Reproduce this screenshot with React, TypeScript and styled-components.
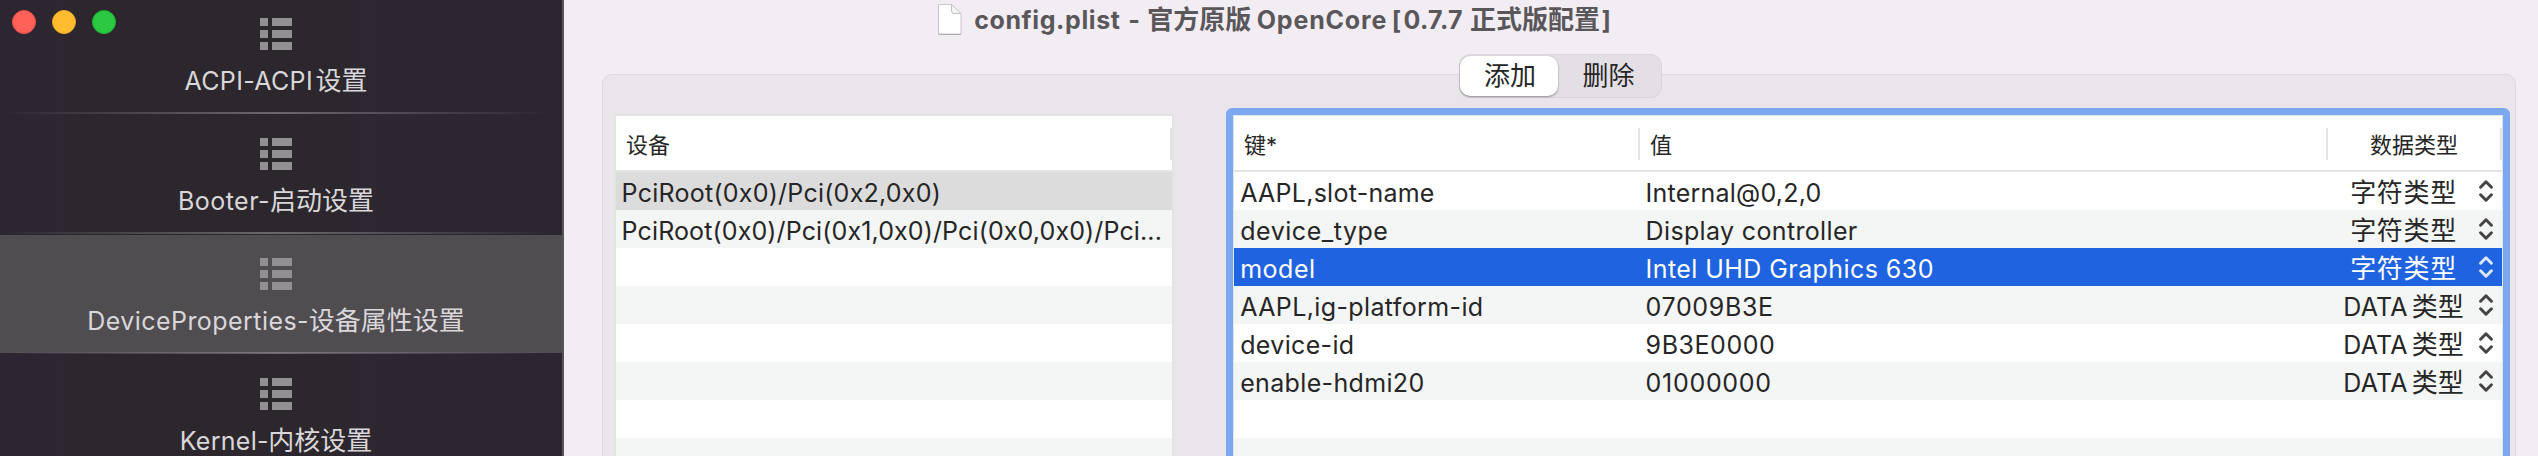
import React from 'react';
import styled, { createGlobalStyle } from 'styled-components';

const GlobalStyle = createGlobalStyle`
  html, body { margin: 0; padding: 0; overflow: hidden; background: #f2edf3; }
  *, *::before, *::after { box-sizing: border-box; }
`;

const Window = styled.div`
  position: relative;
  display: flex;
  width: 2538px;
  height: 456px;
  overflow: hidden;
  background: #f2edf3;
  color: #262626;
  font-family: Inter, "Noto Sans CJK SC", sans-serif;
  font-size: 25px;
  white-space: nowrap;
`;

const Sidebar = styled.aside`
  flex: none;
  width: 564px;
  height: 456px;
  overflow: hidden;
  border-right: 2px solid #585357;
  background: linear-gradient(90deg, #2c2632 0, #2c2731 60px, #2c272d 74px, #2c272d 345px, #2c2731 356px, #2c2631 100%);
`;

const TrafficLights = styled.div`
  position: absolute;
  top: 10px;
  left: 12px;
  display: flex;
  gap: 16px;
`;

const Light = styled.span<{ $fill: string; $edge: string }>`
  width: 24px;
  height: 24px;
  border-radius: 50%;
  background: ${p => p.$fill};
  border: 1px solid ${p => p.$edge};
`;

const NavItem = styled.div<{ $first?: boolean; $active?: boolean }>`
  display: flex;
  flex-direction: column;
  height: ${p => (p.$first ? 114 : 120)}px;
  padding-top: ${p => (p.$first ? 18 : 24)}px;
  background: ${p => (p.$active ? 'linear-gradient(#504d51, #504d51) 0 1px / 100% 118px no-repeat' : 'none')};

  & > svg { display: block; flex: none; margin-left: 260px; }
`;

const NavLabel = styled.div`
  width: 552px;
  height: 60px;
  margin-top: 2px;
  line-height: 58px;
  text-align: center;
  color: #d9d7d9;
`;

const NavRule = styled.div`
  flex: none;
  width: 552px;
  height: 2px;
  background: linear-gradient(90deg, rgba(160, 155, 162, 0), rgba(160, 155, 162, 0.55) 50%, rgba(160, 155, 162, 0));
`;

const Latin = styled.span<{ $track?: number; $gap?: number }>`
  letter-spacing: ${p => p.$track ?? 0}px;
  margin-left: ${p => p.$gap ?? 0}px;
`;

const Han = styled.span<{ $gap?: number; $track?: number }>`
  font-size: 26px;
  line-height: 0;
  letter-spacing: ${p => p.$track ?? 0}px;
  margin-left: ${p => p.$gap ?? 0}px;
`;

const Main = styled.main`
  position: relative;
  flex: 1;
  display: flex;
  flex-direction: column;
`;

const TitleBar = styled.header`
  display: flex;
  flex: none;
  align-items: flex-start;
  height: 74px;
  padding-left: 372px;
  font-weight: 700;
  color: #59575a;

  & > svg { display: block; flex: none; margin-top: 2px; }
`;

const Title = styled.div`
  margin-left: 12.2px;
  height: 40px;
  line-height: 41px;
`;

const Segmented = styled.div`
  position: absolute;
  top: 54px;
  left: 895px;
  display: flex;
  width: 203px;
  height: 44px;
  padding: 2px 3px 2px 1px;
  border-radius: 12px;
  background: #e4dfe5;
  box-shadow: inset 0 0 0 1px #dbd6dc;
  font-size: 26px;
`;

const Segment = styled.div<{ $on?: boolean }>`
  flex: ${p => (p.$on ? '0 0 98px' : '1')};
  height: 40px;
  line-height: 39px;
  padding-left: ${p => (p.$on ? 2 : 0)}px;
  text-align: center;
  border-radius: 10px;
  background: ${p => (p.$on ? '#fff' : 'none')};
  box-shadow: ${p => (p.$on ? '0 1px 2px rgba(0,0,0,.35), 0 0 1px rgba(0,0,0,.2)' : 'none')};
`;

const Panel = styled.section`
  display: flex;
  flex: none;
  align-items: flex-start;
  height: 400px;
  margin: 0 22px 0 38px;
  padding: 39px 5px 0 11px;
  border: 1px solid #dcd7dd;
  border-radius: 10px;
  background: #eae5ea;
`;

const DeviceTable = styled.div`
  width: 560px;
  height: 360px;
  border: 2px solid #e4e3e4;
  background: #fff;
`;

const FocusRing = styled.div`
  width: 1284px;
  height: 370px;
  margin: -6px 0 0 52px;
  border: 7px solid #7ba8ef;
  border-radius: 6px;
`;

const PropertyTable = styled.div`
  height: 356px;
  border: 1px solid #dfe4ea;
  background: #fff;
`;

const HeadRow = styled.div`
  display: flex;
  height: 56px;
  padding-top: 12px;
  border-bottom: 2px solid #e4e4e4;
  font-size: 22px;
`;

const HeadCell = styled.div<{ $w: number; $center?: boolean }>`
  width: ${p => p.$w}px;
  height: 32px;
  line-height: 34px;
  padding-left: ${p => (p.$center ? 0 : 10)}px;
  text-align: ${p => (p.$center ? 'center' : 'left')};
  border-right: 2px solid #e4e4e4;
`;

type Tone = 'even' | 'odd' | 'muted' | 'active';
const tones: Record<Tone, string> = { even: '#ffffff', odd: '#f4f5f5', muted: '#dcdcdc', active: '#1f63e0' };

const Row = styled.div<{ $tone: Tone }>`
  display: flex;
  height: 38px;
  line-height: 42px;
  background: ${p => tones[p.$tone]};
  color: ${p => (p.$tone === 'active' ? '#fff' : '#262626')};
`;

const Cell = styled.div<{ $w: number; $pad: number; $track: number }>`
  width: ${p => p.$w}px;
  padding-left: ${p => p.$pad}px;
  letter-spacing: ${p => p.$track}px;
`;

const TypeCell = styled.div`
  display: flex;
  width: 174px;

  & > svg { display: block; flex: none; margin-top: 8px; }
`;

const TypeLabel = styled.div`
  width: 151px;
  text-align: center;
`;

const ListIcon = () => (
  <svg width="32" height="32" viewBox="0 0 32 32" fill="#929092">
    {[0, 12, 24].map(y => (
      <React.Fragment key={y}>
        <rect x="0" y={y} width="8" height="8" />
        <rect x="12" y={y} width="20" height="8" />
      </React.Fragment>
    ))}
  </svg>
);

const FileIcon = () => (
  <svg width="26" height="34" viewBox="0 0 26 34">
    <path d="M2.5 2.5H15.5L25 12V32H2.5Z" fill="#fff" stroke="#c9c5ca" strokeWidth="1" strokeLinejoin="round" />
    <path d="M15.5 2.5V9Q15.5 11.5 18 11.5H25Z" fill="#f7f5f7" stroke="#c4c0c5" strokeWidth="1" strokeLinejoin="round" />
    <path d="M2.5 32.5H25" stroke="#b0acb1" strokeWidth="1" />
  </svg>
);

const Chevrons = ({ active }: { active: boolean }) => (
  <svg width="14" height="22" viewBox="0 0 14 22" fill="none" stroke={active ? '#dce8fb' : '#444444'}
    strokeWidth="3" strokeLinecap="round" strokeLinejoin="round">
    <path d="M1.6 7.2L7 1.8L12.4 7.2" />
    <path d="M1.6 14.8L7 20.2L12.4 14.8" />
  </svg>
);

const sections = [
  { latin: 'ACPI-ACPI', han: '设置', track: 0.36, gap: 2.5 },
  { latin: 'Booter-', han: '启动设置', track: 0.49, gap: 0 },
  { latin: 'DeviceProperties-', han: '设备属性设置', track: 0.45, gap: -0.3, active: true },
  { latin: 'Kernel-', han: '内核设置', track: 0.3, gap: -0.6 },
];

const devices: { path: string; track: number; tone: Tone }[] = [
  { path: 'PciRoot(0x0)/Pci(0x2,0x0)', track: 0.25, tone: 'muted' },
  { path: 'PciRoot(0x0)/Pci(0x1,0x0)/Pci(0x0,0x0)/Pci...', track: 0.126, tone: 'odd' },
  ...(['even', 'odd', 'even', 'odd', 'even', 'odd'] as Tone[]).map(tone => ({ path: '', track: 0, tone })),
];

const properties = [
  { key: 'AAPL,slot-name', kt: 0.26, value: 'Internal@0,2,0', vt: 0.23, data: false },
  { key: 'device_type', kt: 0.54, value: 'Display controller', vt: 0.35, data: false },
  { key: 'model', kt: 0.5, value: 'Intel UHD Graphics 630', vt: 0.43, data: false, active: true },
  { key: 'AAPL,ig-platform-id', kt: 0.38, value: '07009B3E', vt: 0.64, data: true },
  { key: 'device-id', kt: 0.34, value: '9B3E0000', vt: 0.54, data: true },
  { key: 'enable-hdmi20', kt: 0.34, value: '01000000', vt: 0.7, data: true },
];

export default function App() {
  return (
    <Window>
      <GlobalStyle />
      <Sidebar>
        {sections.map((s, i) => (
          <NavItem key={s.latin} $first={i === 0} $active={s.active}>
            <ListIcon />
            <NavLabel>
              <Latin $track={s.track}>{s.latin}</Latin>
              <Han $gap={s.gap}>{s.han}</Han>
            </NavLabel>
            <NavRule />
          </NavItem>
        ))}
      </Sidebar>
      <TrafficLights>
        <Light $fill="#ff6058" $edge="#ee4f49" />
        <Light $fill="#ffbd2e" $edge="#eda827" />
        <Light $fill="#2ac941" $edge="#1fb032" />
      </TrafficLights>
      <Main>
        <TitleBar>
          <FileIcon />
          <Title>
            <Latin $track={0.6}>config.plist</Latin>
            <Latin $gap={7.8}>-</Latin>
            <Han $gap={7.2}>官方原版</Han>
            <Latin $track={0.83} $gap={5.5}>OpenCore</Latin>
            <Latin $gap={4.5}>[</Latin>
            <Latin $track={0.41} $gap={2.3}>0.7.7</Latin>
            <Han $gap={7}>正式版配置</Han>
            <Latin $gap={1.5}>]</Latin>
          </Title>
        </TitleBar>
        <Panel>
          <DeviceTable>
            <HeadRow>
              <HeadCell $w={556}>设备</HeadCell>
            </HeadRow>
            {devices.map((d, i) => (
              <Row key={i} $tone={d.tone}>
                <Cell $w={556} $pad={5.6} $track={d.track}>{d.path}</Cell>
              </Row>
            ))}
          </DeviceTable>
          <FocusRing>
            <PropertyTable>
              <HeadRow>
                <HeadCell $w={406}>键*</HeadCell>
                <HeadCell $w={688}>值</HeadCell>
                <HeadCell $w={174} $center>数据类型</HeadCell>
              </HeadRow>
              {properties.map((p, i) => (
                <Row key={p.key} $tone={p.active ? 'active' : i % 2 ? 'odd' : 'even'}>
                  <Cell $w={406} $pad={6.2} $track={p.kt}>{p.key}</Cell>
                  <Cell $w={688} $pad={5.6} $track={p.vt}>{p.value}</Cell>
                  <TypeCell>
                    <TypeLabel>
                      {p.data ? (
                        <>
                          <Latin $track={0.2}>DATA</Latin>
                          <Han $gap={4}>类型</Han>
                        </>
                      ) : (
                        <Han $track={0.67}>字符类型</Han>
                      )}
                    </TypeLabel>
                    <Chevrons active={!!p.active} />
                  </TypeCell>
                </Row>
              ))}
              <Row $tone="even" />
              <Row $tone="odd" />
            </PropertyTable>
          </FocusRing>
        </Panel>
        <Segmented>
          <Segment $on>添加</Segment>
          <Segment>删除</Segment>
        </Segmented>
      </Main>
    </Window>
  );
}
